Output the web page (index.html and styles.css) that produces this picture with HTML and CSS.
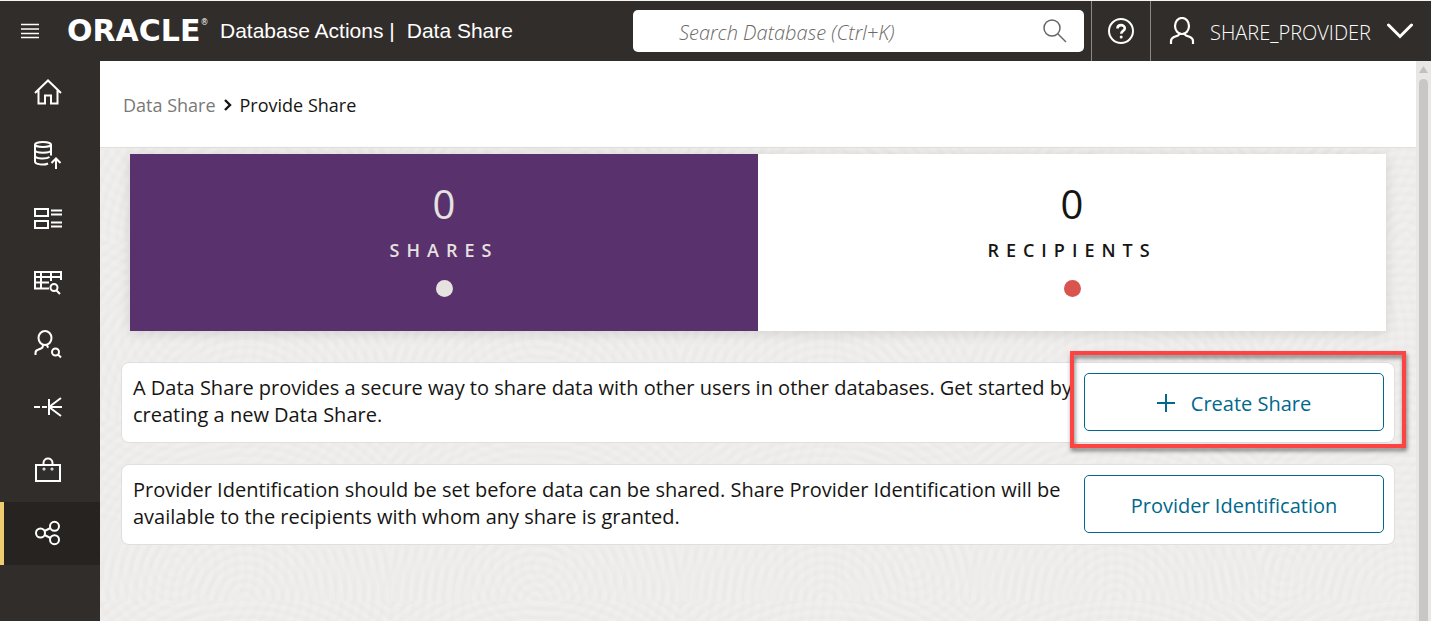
FILE: index.html
```html
<!DOCTYPE html>
<html lang="en">
<head>
<meta charset="utf-8">
<title>Data Share</title>
<link rel="stylesheet" href="styles.css">
</head>
<body>
<header class="topbar">
  <button class="icon-button menu" aria-label="Menu">
    <svg width="20" height="16" viewBox="0 0 20 16"><path d="M1 1.500h18M1 6h18M1 10.500h18M1 14.500h18" stroke="#fff" stroke-width="1.500"/></svg>
  </button>
  <span class="logo">ORACLE<sup class="reg">®</sup></span>
  <h1 class="product"><span>Database Actions |</span><span>Data Share</span></h1>
  <form class="search" role="search">
    <input class="search-input" type="search" aria-label="Search Database" placeholder="Search Database (Ctrl+K)">
    <button class="icon-button" type="button" aria-label="Search">
      <svg width="24" height="24" viewBox="0 0 24 24" fill="none" stroke="#666" stroke-width="1.500"><circle cx="9" cy="9" r="8"/><path d="M15 15l8 8"/></svg>
    </button>
  </form>
  <button class="icon-button help" aria-label="Help">
    <svg width="26" height="26" viewBox="0 0 26 26" fill="none" stroke="#fff"><circle cx="13" cy="13" r="12" stroke-width="2"/><path d="M9.500 10.500C9.500 6 16.800 6.200 16.800 10.200C16.800 13 13.200 12.700 13.200 15.800" stroke-width="2.600"/><circle cx="13.200" cy="19" r="1.500" fill="#fff" stroke="none"/></svg>
  </button>
  <button class="user">
    <svg width="26" height="28" viewBox="0 0 26 28" fill="none" stroke="#fff" stroke-width="2.200"><ellipse cx="13" cy="9" rx="7" ry="8"/><path d="M2 27v-3c0-2 1-3 3-4l4-1.500c1-.5 1.500-1.500 1.500-3M24 27v-3c0-2-1-3-3-4l-4-1.500c-1-.5-1.500-1.500-1.500-3"/></svg>
    <span class="user-name">SHARE_PROVIDER</span>
    <svg width="26" height="16" viewBox="0 0 26 16" fill="none" stroke="#fff" stroke-width="3" stroke-linecap="round"><path d="M1.500 2L13 13.500 24.500 2"/></svg>
  </button>
</header>
<div class="shell">
  <nav class="sidebar" aria-label="Main">
    <a class="nav-item" href="#" aria-label="Home"><svg class="nav-icon" viewBox="0 0 28 28"><path d="M1 15L14 2.500 27 15M4.500 12v13.500h6.500v-8h6v8h6.500V12"/></svg></a>
    <a class="nav-item" href="#" aria-label="Data Load"><svg class="nav-icon" viewBox="0 0 28 28"><ellipse cx="9" cy="3.500" rx="8" ry="2.500"/><path d="M1 3.500v17c0 3 9 4 13 2M17 3.500v11M1 9c0 3.500 16 3.500 16 0M1 14.500c0 3.500 11 4 14.500 1.500M22 28V18M17.500 22l4.500-4.500 4.500 4.500"/></svg></a>
    <a class="nav-item" href="#" aria-label="Catalog"><svg class="nav-icon" viewBox="0 0 28 28"><path d="M1 5h13v7H1zM1 17h13v7H1zM17 6.500h11M17 10.500h11M17 18.500h11M17 22.500h11"/></svg></a>
    <a class="nav-item" href="#" aria-label="Data Insights"><svg class="nav-icon" viewBox="0 0 28 28"><path d="M15 21.500H1V5h26v8M1 10h26M1 15.500h14M7 5v16.500M17 5v9M22.500 23.500l3.500 3.500"/><circle cx="20" cy="20.500" r="3.500"/></svg></a>
    <a class="nav-item" href="#" aria-label="Business Models"><svg class="nav-icon" viewBox="0 0 28 28"><ellipse cx="11" cy="8" rx="6.500" ry="7"/><path d="M1.500 25v-2c0-2 1-3 3-3.500l2.500-1c1.500-.5 2-1.500 2-3.500M13 15c0 1 .5 2 1.500 2.500M24 24.500l3 3"/><circle cx="21.500" cy="22" r="3.500"/></svg></a>
    <a class="nav-item" href="#" aria-label="Data Transforms"><svg class="nav-icon" viewBox="0 0 28 28"><path d="M0 14h6M8 14h5M15 6v16M15 14h13M15 14L27 5M15 14l12 9"/></svg></a>
    <a class="nav-item" href="#" aria-label="Marketplace"><svg class="nav-icon" viewBox="0 0 28 28"><path d="M2 9h24v16H2zM9.500 9V7c0-6 9-6 9 0v2"/><circle cx="10" cy="13" r=".5"/><circle cx="18" cy="13" r=".5"/></svg></a>
    <a class="nav-item active" href="#" aria-label="Data Share" aria-current="page"><svg class="nav-icon" viewBox="0 0 28 28"><circle cx="6.500" cy="14" r="4.500"/><circle cx="20.500" cy="7.300" r="4.500"/><circle cx="20.500" cy="20.700" r="4.500"/><path d="M10.500 12l6-3M10.500 16l6 3"/></svg></a>
  </nav>
  <main class="content">
    <nav class="breadcrumb" aria-label="Breadcrumb">
      <a class="crumb" href="#">Data Share</a>
      <svg width="8" height="12" viewBox="0 0 8 12" fill="none" stroke="#161513" stroke-width="2.400"><path d="M1 1l5 5-5 5"/></svg>
      <span>Provide Share</span>
    </nav>
    <div class="tiles">
      <button class="tile selected"><span class="count">0</span><span class="tile-label">SHARES</span><span class="dot"></span></button>
      <button class="tile"><span class="count">0</span><span class="tile-label">RECIPIENTS</span><span class="dot"></span></button>
    </div>
    <section class="cards">
      <div class="card">
        <p class="card-text">A Data Share provides a secure way to share data with other users in other databases. Get started by creating a new Data Share.</p>
        <div class="action">
          <button class="outline-button"><svg width="18" height="18" viewBox="0 0 18 18" stroke="#00688c" stroke-width="2"><path d="M9 0v18M0 9h18"/></svg>Create Share</button>
          <span class="highlight"></span>
        </div>
      </div>
      <div class="card">
        <p class="card-text">Provider Identification should be set before data can be shared. Share Provider Identification will be available to the recipients with whom any share is granted.</p>
        <div class="action"><button class="outline-button">Provider Identification</button></div>
      </div>
    </section>
  </main>
  <div class="scrollbar" aria-hidden="true">
    <svg width="9" height="7" viewBox="0 0 9 7"><path d="M4.500 0L9 7H0z" fill="#c1c0bf"/></svg>
    <div class="thumb"></div>
  </div>
</div>
</body>
</html>
```

FILE: styles.css
```css
* { box-sizing: border-box; }

body {
  margin: 0;
  min-height: 100vh;
  display: flex;
  flex-direction: column;
  font-family: "Open Sans", "Noto Sans", sans-serif;
  font-size: 20px;
  color: #161513;
  background: #f0efed;
}

button { font: inherit; color: inherit; border: 0; background: none; padding: 0; cursor: pointer; }
svg { display: block; flex: none; }

.topbar {
  display: flex;
  align-items: center;
  height: 61px;
  border-top: 1px solid #f4f4f2;
  background: #312d2a;
  color: #fff;
}
.icon-button { display: flex; align-items: center; justify-content: center; }
.menu { width: 20px; margin-left: 20px; }
.logo {
  display: flex;
  align-items: flex-start;
  width: 153px;
  margin-left: 27px;
  font: bold 30px/32px "DejaVu Sans", sans-serif;
}
.reg { font-size: 8px; line-height: 16px; font-weight: 400; }
.product {
  display: flex;
  gap: 12px;
  margin: 0;
  font: 400 21px/28px "Liberation Sans", Arial, sans-serif;
  white-space: nowrap;
}
.search {
  display: flex;
  align-items: center;
  width: 451px;
  height: 42px;
  margin-left: auto;
  margin-right: 7px;
  padding: 0 17px 0 46px;
  border-radius: 5px;
  background: #fff;
}
.search-input {
  flex: 1;
  min-width: 0;
  padding: 3px 0 0;
  border: 0;
  outline: 0;
  background: none;
  font: italic 300 20px/28px "Open Sans", "Noto Sans", sans-serif;
}
.search-input::placeholder { color: #6b6967; opacity: 1; }
.help { width: 60px; align-self: stretch; border: solid #8b8886; border-width: 0 1px; }
.user { display: flex; align-items: center; padding: 0 18px; }
.user-name { width: 163px; margin: 0 14px 0 15px; padding-top: 2px; font-weight: 300; text-align: left; }

.shell { flex: 1; display: flex; }
.sidebar { flex: none; width: 100px; background: #312d2a; }
.nav-item {
  display: flex;
  align-items: center;
  justify-content: center;
  height: 63px;
  padding: 0 8px 2px 0;
  border: solid transparent;
  border-width: 0 0 0 4px;
}
.nav-item.active { background: #272320; border-left-color: #f0cc71; }
.nav-icon { width: 28px; height: 28px; fill: none; stroke: #fff; stroke-width: 2; overflow: visible; }

.content {
  flex: 1;
  min-width: 0;
  background:
    repeating-radial-gradient(circle at 50% 100%, rgba(0,0,0,.01) 0 3px, transparent 6px 9px) 0 0 / 290px 180px,
    repeating-radial-gradient(circle at 20% 20%, rgba(0,0,0,.008) 0 3px, transparent 6px 10px) 0 0 / 370px 230px,
    #f0efed;
}
.breadcrumb {
  display: flex;
  align-items: center;
  gap: 8px;
  height: 87px;
  padding: 2px 23px 0;
  border-bottom: 1px solid #e0dfdd;
  background: #fff;
  font-size: 18px;
}
.crumb { color: #7a7876; text-decoration: none; }

.tiles { display: grid; grid-template-columns: 1fr 1fr; margin: 6px 30px 0; box-shadow: 0 2px 12px rgba(0,0,0,.12); }
.tile { display: flex; flex-direction: column; align-items: center; height: 177px; padding-top: 23px; background: #fff; }
.tile.selected { background: #59316d; color: #e5e2df; }
.count { font-size: 40px; line-height: 54px; }
.tile-label { margin-top: 5px; font-size: 18px; line-height: 28px; font-weight: 600; letter-spacing: 7px; }
.dot { width: 17px; height: 17px; margin-top: 16px; border-radius: 50%; background: #d9534f; }
.selected .dot { background: #e5e2df; }

.cards { display: grid; gap: 21px; margin: 31px 21px 0; }
.card { display: flex; gap: 8px; padding: 10px 10px 11px; border: 1px solid #e0dfdd; border-radius: 8px; background: #fff; }
.card-text { flex: 1; margin: 1px 0 0; padding-left: 1px; line-height: 27px; }
.action { position: relative; flex: none; width: 300px; }
.outline-button {
  display: flex;
  align-items: center;
  justify-content: center;
  gap: 16px;
  width: 100%;
  height: 58px;
  padding-top: 2px;
  border: 1px solid #00688c;
  border-radius: 5px;
  color: #00688c;
}
.highlight {
  position: absolute;
  inset: -22px -22px -17px -14px;
  border: 4px solid #fe4343;
  filter: drop-shadow(1px 3px 2px rgba(0,0,0,.5));
  pointer-events: none;
}

.scrollbar { flex: none; display: flex; flex-direction: column; align-items: center; gap: 6px; width: 15px; padding-top: 5px; background: #e8e7e6; }
.thumb { flex: 1; width: 9px; border-radius: 5px 5px 0 0; background: #c8c7c6; }
```
